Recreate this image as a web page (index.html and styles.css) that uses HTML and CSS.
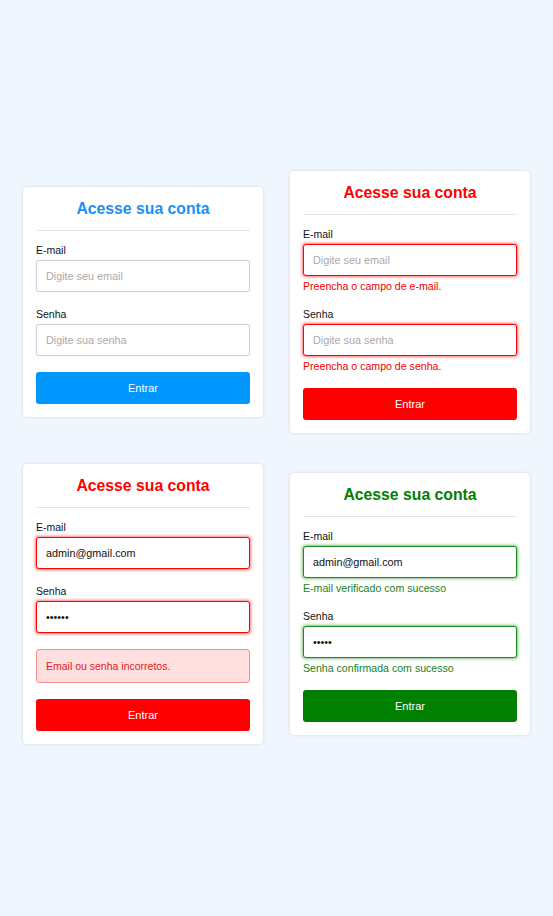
FILE: index.html
```html
<!DOCTYPE html>
<html lang="pt-BR">
<head>
<meta charset="utf-8">
<title>Acesse sua conta</title>
<link rel="stylesheet" href="styles.css">
</head>
<body>
<main class="grid">
  <form class="card theme-blue">
    <h2 class="card-title">Acesse sua conta</h2>
    <div class="field">
      <label class="field-label">E-mail</label>
      <input class="field-input" type="email" placeholder="Digite seu email">
    </div>
    <div class="field">
      <label class="field-label">Senha</label>
      <input class="field-input" type="password" placeholder="Digite sua senha">
    </div>
    <button class="btn" type="button">Entrar</button>
  </form>

  <form class="card theme-red">
    <h2 class="card-title">Acesse sua conta</h2>
    <div class="field">
      <label class="field-label">E-mail</label>
      <input class="field-input is-error" type="email" placeholder="Digite seu email">
      <p class="field-msg msg-error">Preencha o campo de e-mail.</p>
    </div>
    <div class="field">
      <label class="field-label">Senha</label>
      <input class="field-input is-error" type="password" placeholder="Digite sua senha">
      <p class="field-msg msg-error">Preencha o campo de senha.</p>
    </div>
    <button class="btn" type="button">Entrar</button>
  </form>

  <form class="card theme-red">
    <h2 class="card-title">Acesse sua conta</h2>
    <div class="field">
      <label class="field-label">E-mail</label>
      <input class="field-input is-error" type="email" value="admin@gmail.com">
    </div>
    <div class="field">
      <label class="field-label">Senha</label>
      <input class="field-input is-error" type="password" value="123456">
    </div>
    <div class="alert">Email ou senha incorretos.</div>
    <button class="btn" type="button">Entrar</button>
  </form>

  <form class="card theme-green">
    <h2 class="card-title">Acesse sua conta</h2>
    <div class="field">
      <label class="field-label">E-mail</label>
      <input class="field-input is-success" type="email" value="admin@gmail.com">
      <p class="field-msg msg-success">E-mail verificado com sucesso</p>
    </div>
    <div class="field">
      <label class="field-label">Senha</label>
      <input class="field-input is-success" type="password" value="12345">
      <p class="field-msg msg-success">Senha confirmada com sucesso</p>
    </div>
    <button class="btn" type="button">Entrar</button>
  </form>
</main>
</body>
</html>
```

FILE: styles.css
```css
* {
  box-sizing: border-box;
}

html, body {
  margin: 0;
  padding: 0;
}

body {
  min-height: 100vh;
  background: #f0f6fd;
  font-family: "Liberation Sans", Arial, sans-serif;
  color: #222;
  display: flex;
  align-items: center;
  justify-content: center;
}

.grid {
  display: grid;
  grid-template-columns: 240px 240px;
  column-gap: 27px;
  row-gap: 31px;
  align-items: center;
  margin-bottom: 1px;
}

.card {
  width: 240px;
  background: #fff;
  border-radius: 4px;
  padding: 13px;
  box-shadow: 0 0 3px rgba(0, 0, 0, 0.14);
  margin: 0;
}

.card-title {
  margin: 0 0 13px;
  padding-bottom: 12px;
  border-bottom: 1px solid #e6e6e6;
  font-size: 15.75px;
  line-height: 18px;
  font-weight: bold;
  text-align: center;
}

.theme-blue .card-title { color: #1a90f5; }
.theme-red .card-title { color: #f00; }
.theme-green .card-title { color: #008000; }

.field {
  margin-bottom: 16px;
}

.field-label {
  display: block;
  font-size: 10.5px;
  line-height: 12px;
  margin-bottom: 4px;
  color: #111;
}

.field-input {
  display: block;
  width: 100%;
  height: 32px;
  padding: 0 9px;
  border: 1px solid #d2d2d2;
  border-radius: 3px;
  box-shadow: 0 0 2px rgba(0, 0, 0, 0.08);
  font-family: "Liberation Sans", Arial, sans-serif;
  font-size: 10.8px;
  color: #111;
  background: #fff;
  outline: none;
}

.field-input::placeholder {
  color: #aaa;
}

.field-input.is-error {
  border-color: #f00;
  box-shadow: 0 0 3px 1px rgba(255, 0, 0, 0.55);
}

.field-input.is-success {
  border-color: #1d8a1d;
  box-shadow: 0 0 3px 1px rgba(0, 128, 0, 0.5);
}

.field-msg {
  margin: 4px 0 0;
  font-size: 10.6px;
  line-height: 12px;
}

.msg-error { color: #e00; }
.msg-success { color: #1a7f1a; }

.alert {
  margin-bottom: 16px;
  padding: 10px 9px;
  font-size: 10.5px;
  line-height: 12px;
  color: #e01b1b;
  background: #ffdfe0;
  border: 1px solid #f29090;
  border-radius: 3px;
}

.btn {
  display: block;
  width: 100%;
  height: 32px;
  border: none;
  border-radius: 3px;
  font-family: "Liberation Sans", Arial, sans-serif;
  font-size: 11px;
  color: #fff;
  cursor: pointer;
}

.theme-blue .btn { background: #0096ff; }
.theme-red .btn { background: #f00; }
.theme-green .btn { background: #008000; }
```
